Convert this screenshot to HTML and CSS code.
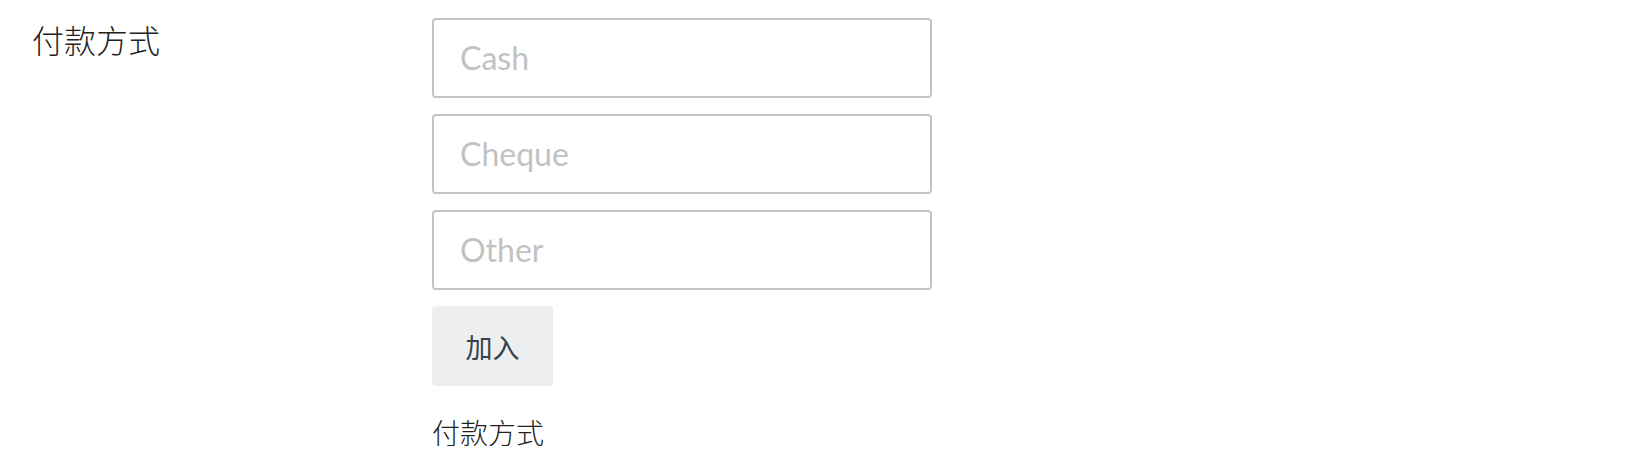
FILE: index.html
```html
<!DOCTYPE html>
<html lang="zh">
<head>
<meta charset="utf-8">
<title>付款方式</title>
<link rel="stylesheet" href="styles.css">
</head>
<body>
<div class="form-row">
  <div class="label">付款方式</div>
  <div class="field">
    <input class="text-input" type="text" placeholder="Cash">
    <input class="text-input" type="text" placeholder="Cheque">
    <input class="text-input" type="text" placeholder="Other">
    <button class="add-btn" type="button">加入</button>
    <div class="sub-label">付款方式</div>
  </div>
</div>
</body>
</html>
```
FILE: styles.css
```css
html, body {
  margin: 0;
  padding: 0;
  background: #ffffff;
}
body {
  font-family: "Lato", "Noto Sans CJK SC", sans-serif;
  color: #2d2d2d;
}
.form-row {
  display: grid;
  grid-template-columns: 400px 500px;
  padding: 18px 0 0 32px;
}
.label {
  font-family: "Noto Sans CJK SC", sans-serif;
  font-weight: 300;
  font-size: 32px;
  line-height: 32px;
  margin-top: 5px;
  color: #222222;
}
.field {
  display: flex;
  flex-direction: column;
  align-items: flex-start;
  gap: 16px;
}
.text-input {
  box-sizing: border-box;
  width: 500px;
  height: 80px;
  margin: 0;
  border: 2px solid #c3c3c3;
  border-radius: 4px;
  padding: 0 26px 2px;
  font-family: "Lato", sans-serif;
  font-size: 32px;
  color: #2d3b45;
  background: #fff;
  outline: none;
}
.text-input::placeholder {
  color: #c2c2c2;
}
.add-btn {
  box-sizing: border-box;
  width: 121px;
  height: 80px;
  border: none;
  border-radius: 4px;
  background: #edeef0;
  color: #35424b;
  font-family: "Noto Sans CJK SC", sans-serif;
  font-size: 27px;
  padding: 0;
  cursor: pointer;
}
.sub-label {
  font-family: "Noto Sans CJK SC", sans-serif;
  font-weight: 300;
  font-size: 28px;
  line-height: 28px;
  margin-top: 16px;
  color: #222222;
}
```
